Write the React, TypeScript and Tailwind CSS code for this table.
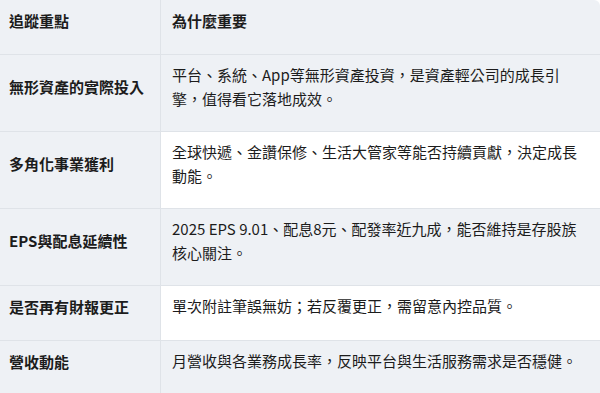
const rows = [
  { key: '無形資產的實際投入', why: '平台、系統、App等無形資產投資，是資產輕公司的成長引擎，值得看它落地成效。' },
  { key: '多角化事業獲利', why: '全球快遞、金讚保修、生活大管家等能否持續貢獻，決定成長動能。' },
  { key: 'EPS與配息延續性', why: '2025 EPS 9.01、配息8元、配發率近九成，能否維持是存股族核心關注。' },
  { key: '是否再有財報更正', why: '單次附註筆誤無妨；若反覆更正，需留意內控品質。' },
  { key: '營收動能', why: '月營收與各業務成長率，反映平台與生活服務需求是否穩健。' },
];

export default function App() {
  return (
    <div
      className="w-[600px] h-[393px] overflow-hidden bg-white text-[15px] text-[#1c1c1c]"
      style={{ fontFamily: '"Noto Sans CJK TC", "Noto Sans", sans-serif' }}
    >
      <div className="rounded-tr-md overflow-hidden">
        <div className="flex bg-[#eef1f5] border-b border-[#dfe3e8] font-bold">
          <div className="w-[161px] shrink-0 border-r border-[#dfe3e8] pl-[9px] pt-2 pb-5 leading-[26px]">追蹤重點</div>
          <div className="flex-1 pl-[11px] pr-3 pt-2 pb-5 leading-[26px]">為什麼重要</div>
        </div>
        {rows.map((row, i) => (
          <div key={i} className="flex border-b border-[#dfe3e8]">
            <div className="w-[161px] shrink-0 flex items-center bg-[#eef1f5] border-r border-[#dfe3e8] pl-[9px] pt-2 pb-5 font-bold leading-[26px]">
              {row.key}
            </div>
            <div className={`flex-1 pl-[11px] pr-3 pt-2 pb-5 leading-[24px] ${i % 2 === 1 ? 'bg-white' : 'bg-[#eef1f5]'}`}>
              {row.why}
            </div>
          </div>
        ))}
      </div>
    </div>
  );
}
